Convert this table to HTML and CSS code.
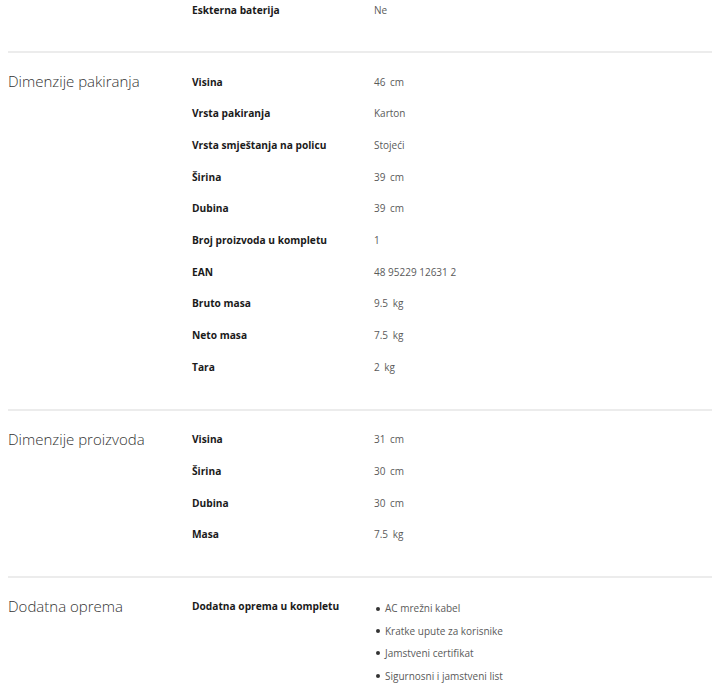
FILE: index.html
```html
<!DOCTYPE html>
<html lang="hr">
<head>
<meta charset="utf-8">
<link rel="stylesheet" href="styles.css">
</head>
<body>
<div class="specs">
  <section class="spec-section first">
    <h3 class="spec-title"></h3>
    <dl class="spec-rows">
      <div class="row"><dt>Eskterna baterija</dt><dd>Ne</dd></div>
    </dl>
  </section>
  <section class="spec-section">
    <h3 class="spec-title">Dimenzije pakiranja</h3>
    <dl class="spec-rows">
      <div class="row"><dt>Visina</dt><dd>46 <span class="unit">cm</span></dd></div>
      <div class="row"><dt>Vrsta pakiranja</dt><dd>Karton</dd></div>
      <div class="row"><dt>Vrsta smještanja na policu</dt><dd>Stojeći</dd></div>
      <div class="row"><dt>Širina</dt><dd>39 <span class="unit">cm</span></dd></div>
      <div class="row"><dt>Dubina</dt><dd>39 <span class="unit">cm</span></dd></div>
      <div class="row"><dt>Broj proizvoda u kompletu</dt><dd>1</dd></div>
      <div class="row"><dt>EAN</dt><dd>48 95229 12631 2</dd></div>
      <div class="row"><dt>Bruto masa</dt><dd>9.5 <span class="unit">kg</span></dd></div>
      <div class="row"><dt>Neto masa</dt><dd>7.5 <span class="unit">kg</span></dd></div>
      <div class="row"><dt>Tara</dt><dd>2 <span class="unit">kg</span></dd></div>
    </dl>
  </section>
  <section class="spec-section">
    <h3 class="spec-title">Dimenzije proizvoda</h3>
    <dl class="spec-rows">
      <div class="row"><dt>Visina</dt><dd>31 <span class="unit">cm</span></dd></div>
      <div class="row"><dt>Širina</dt><dd>30 <span class="unit">cm</span></dd></div>
      <div class="row"><dt>Dubina</dt><dd>30 <span class="unit">cm</span></dd></div>
      <div class="row"><dt>Masa</dt><dd>7.5 <span class="unit">kg</span></dd></div>
    </dl>
  </section>
  <section class="spec-section last">
    <h3 class="spec-title">Dodatna oprema</h3>
    <dl class="spec-rows">
      <div class="row list-row"><dt>Dodatna oprema u kompletu</dt>
        <dd>
          <ul class="bullets">
            <li>AC mrežni kabel</li>
            <li>Kratke upute za korisnike</li>
            <li>Jamstveni certifikat</li>
            <li>Sigurnosni i jamstveni list</li>
          </ul>
        </dd>
      </div>
    </dl>
  </section>
</div>
</body>
</html>
```
FILE: styles.css
```css
html, body {
  margin: 0;
  padding: 0;
  background: #fff;
}
body {
  font-family: "Open Sans", "Noto Sans", sans-serif;
  color: #222;
  overflow: hidden;
}
.specs {
  padding: 0 12px 0 8px;
  margin-top: -6px;
}
.spec-section {
  display: grid;
  grid-template-columns: 184px 1fr;
  border-top: 2px solid #ececec;
  padding: 13px 0 26px;
}
.spec-section.first {
  border-top: none;
  padding-top: 0;
  padding-bottom: 25px;
}
.spec-title {
  margin: 0;
  font-size: 15px;
  font-weight: 300;
  color: #333;
  line-height: 31.7px;
}
.spec-rows {
  margin: 0;
}
.row {
  display: grid;
  grid-template-columns: 182px 1fr;
  height: 31.7px;
  align-items: center;
}
.row dt {
  font-size: 10.2px;
  font-weight: 700;
  color: #1a1a1a;
}
.row dd {
  margin: 0;
  font-size: 10px;
  color: #5a5a5a;
}
.unit {
  margin-left: 2px;
}
.list-row {
  height: auto;
  align-items: start;
}
.list-row dt {
  line-height: 31.7px;
}
.bullets {
  list-style: none;
  margin: 0;
  padding: 6px 0 0;
}
.bullets li {
  display: flex;
  align-items: center;
  gap: 5px;
  line-height: 22.4px;
  padding-left: 2px;
}
.bullets li::before {
  content: "";
  width: 4px;
  height: 4px;
  border-radius: 50%;
  background: #333;
}
```
